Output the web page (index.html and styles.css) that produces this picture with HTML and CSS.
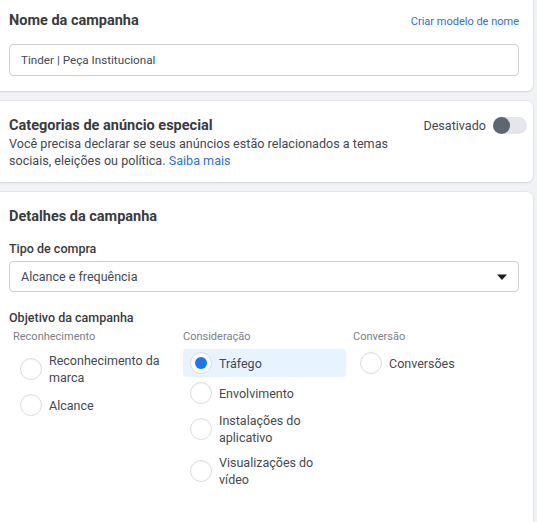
FILE: index.html
```html
<!DOCTYPE html>
<html lang="pt-BR">
<head>
<meta charset="utf-8">
<title>Campanha</title>
<link rel="stylesheet" href="styles.css">
</head>
<body>
<div class="page">
  <section class="card card-name">
    <div class="row-head">
      <h2 class="title">Nome da campanha</h2>
      <a class="link-small" href="#">Criar modelo de nome</a>
    </div>
    <div class="input">Tinder | Peça Institucional</div>
  </section>

  <section class="card card-special">
    <div class="special">
      <div class="special-text">
        <h2 class="title">Categorias de anúncio especial</h2>
        <p class="desc"><span>Você precisa declarar se seus anúncios estão relacionados a temas</span><br><span>sociais, eleições ou política.</span> <a class="link" href="#">Saiba mais</a></p>
      </div>
      <div class="switch-wrap">
        <span class="switch-label">Desativado</span>
        <span class="switch"><span class="knob"></span></span>
      </div>
    </div>
  </section>

  <section class="card card-details">
    <h2 class="title">Detalhes da campanha</h2>
    <div class="label label-buy">Tipo de compra</div>
    <div class="select">
      <span>Alcance e frequência</span>
      <svg class="caret" width="12" height="8" viewBox="0 0 12 8"><path d="M1 1.5h10L6 7z" fill="#1c1e21"/></svg>
    </div>
    <div class="label label-obj">Objetivo da campanha</div>
    <div class="objectives">
      <div class="col">
        <div class="col-head">Reconhecimento</div>
        <div class="opt"><span class="radio"></span><span class="opt-text">Reconhecimento da marca</span></div>
        <div class="opt"><span class="radio"></span><span class="opt-text">Alcance</span></div>
      </div>
      <div class="col">
        <div class="col-head">Consideração</div>
        <div class="opt opt-on"><span class="radio radio-on"></span><span class="opt-text">Tráfego</span></div>
        <div class="opt"><span class="radio"></span><span class="opt-text">Envolvimento</span></div>
        <div class="opt"><span class="radio"></span><span class="opt-text">Instalações do aplicativo</span></div>
        <div class="opt"><span class="radio"></span><span class="opt-text">Visualizações do vídeo</span></div>
      </div>
      <div class="col">
        <div class="col-head">Conversão</div>
        <div class="opt"><span class="radio"></span><span class="opt-text">Conversões</span></div>
      </div>
    </div>
  </section>
</div>
</body>
</html>
```

FILE: styles.css
```css
* { box-sizing: border-box; }
html, body {
  margin: 0;
  padding: 0;
  background: #f0f2f5;
  overflow: hidden;
}
body {
  font-family: Roboto, "Liberation Sans", Arial, sans-serif;
  color: #444950;
  height: 522px;
}
.page {
  display: flex;
  flex-direction: column;
  gap: 10px;
  padding-right: 4px;
}
.card {
  background: #fff;
  border-radius: 6px;
  margin-left: -10px;
  padding-left: 19px;
  padding-right: 14px;
  box-shadow: 0 0 0 1px rgba(0,0,0,0.04), 0 1px 2px rgba(0,0,0,0.08);
}
.title {
  margin: 0;
  font-size: 14.5px;
  line-height: 18px;
  font-weight: 700;
  color: #3a3b3e;
}
.card-name {
  margin-top: -10px;
  padding-top: 22px;
  padding-bottom: 15px;
}
.row-head {
  display: flex;
  justify-content: space-between;
  align-items: center;
}
.link-small {
  font-size: 11px;
  color: #2d6fd6;
  text-decoration: none;
}
.input {
  margin-top: 14px;
  height: 32px;
  border: 1px solid #ccd0d5;
  border-radius: 4px;
  padding: 0 11px;
  display: flex;
  align-items: center;
  font-size: 11.7px;
  color: #444950;
}
.card-special {
  padding-top: 16px;
  padding-bottom: 13px;
}
.special {
  display: flex;
  justify-content: space-between;
  align-items: flex-start;
}
.special-text { width: 400px; }
.desc {
  margin: 0;
  font-size: 12.6px;
  line-height: 17px;
  color: #444950;
}
.link { color: #2d6fd6; text-decoration: none; }
.switch-wrap {
  display: flex;
  align-items: center;
  gap: 7px;
  margin-top: 0;
  margin-right: -8px;
}
.switch-label {
  font-size: 12.6px;
  color: #444950;
}
.switch {
  width: 34px;
  height: 17px;
  border-radius: 9px;
  background: #e4e6eb;
  display: flex;
  align-items: center;
}
.knob {
  width: 17px;
  height: 17px;
  border-radius: 50%;
  background: #5f6673;
}
.card-details {
  padding-top: 16px;
  min-height: 400px;
}
.label {
  font-size: 12.5px;
  line-height: 16px;
  font-weight: 500;
  color: #3a3b3e;
}
.label-buy { margin-top: 15px; }
.select {
  margin-top: 4px;
  height: 31px;
  border: 1px solid #ccd0d5;
  border-radius: 4px;
  padding: 0 11px;
  display: flex;
  align-items: center;
  justify-content: space-between;
  font-size: 12.5px;
  color: #444950;
}
.caret { margin-right: -1px; }
.label-obj { margin-top: 18px; }
.objectives {
  display: grid;
  grid-template-columns: 163px 163px 163px;
  column-gap: 7px;
  margin-left: 4px;
  margin-top: 4px;
}
.col {
  display: flex;
  flex-direction: column;
  gap: 2px;
}
.col-head {
  font-size: 11px;
  line-height: 14px;
  color: #7b7f86;
  margin-bottom: 3px;
}
.opt {
  display: flex;
  align-items: center;
  gap: 7px;
  padding: 3px 8px 3px 7px;
  border-radius: 4px;
}
.opt-on { background: #e7f3ff; }
.radio {
  flex: none;
  width: 22px;
  height: 22px;
  border-radius: 50%;
  border: 1px solid #dadde1;
  background: #fff;
  box-shadow: inset 0 1px 1px rgba(0,0,0,0.04);
  display: flex;
  align-items: center;
  justify-content: center;
}
.radio-on::after {
  content: "";
  width: 12px;
  height: 12px;
  border-radius: 50%;
  background: #1877f2;
}
.opt-text {
  font-size: 12.5px;
  line-height: 17px;
  color: #444950;
}
```
